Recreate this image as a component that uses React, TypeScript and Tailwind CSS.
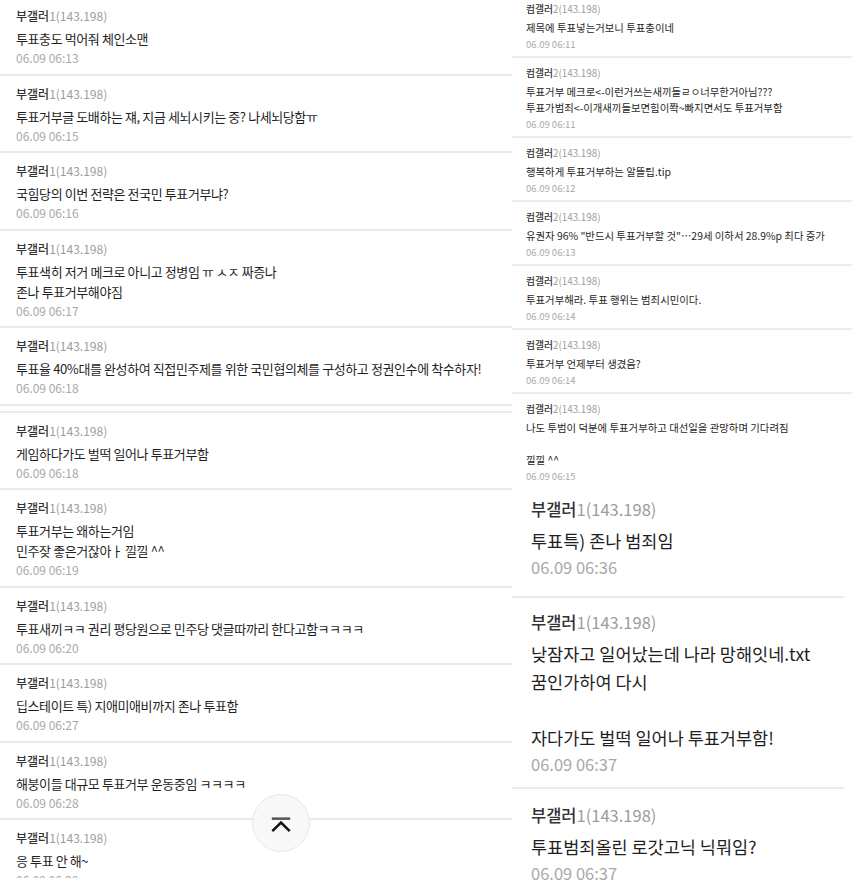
import React from "react";

type Comment = { text: string; time: string };

const leftComments: Comment[] = [
  { text: "투표충도 먹어줘 체인소맨", time: "06.09 06:13" },
  { text: "투표거부글 도배하는 쟤, 지금 세뇌시키는 중? 나세뇌당함ㅠ", time: "06.09 06:15" },
  { text: "국힘당의 이번 전략은 전국민 투표거부냐?", time: "06.09 06:16" },
  { text: "투표색히 저거 메크로 아니고 정병임 ㅠ ㅅㅈ 짜증나\n존나 투표거부해야짐", time: "06.09 06:17" },
  { text: "투표율 40%대를 완성하여 직접민주제를 위한 국민협의체를 구성하고 정권인수에 착수하자!", time: "06.09 06:18" },
];

const leftComments2: Comment[] = [
  { text: "게임하다가도 벌떡 일어나 투표거부함", time: "06.09 06:18" },
  { text: "투표거부는 왜하는거임\n민주잦 좋은거잖아ㅏ 낄낄 ^^", time: "06.09 06:19" },
  { text: "투표새끼ㅋㅋ 권리 평당원으로 민주당 댓글따까리 한다고함ㅋㅋㅋㅋ", time: "06.09 06:20" },
  { text: "딥스테이트 특) 지애미애비까지 존나 투표함", time: "06.09 06:27" },
  { text: "해붕이들 대규모 투표거부 운동중임 ㅋㅋㅋㅋ", time: "06.09 06:28" },
  { text: "응 투표 안 해~", time: "06.09 06:29" },
];

const smallComments: Comment[] = [
  { text: "제목에 투표넣는거보니 투표충이네", time: "06.09 06:11" },
  { text: "투표거부 메크로<-이런거쓰는새끼들ㄹㅇ너무한거아님???\n투표가범죄<-이개새끼들보면힘이쫙~빠지면서도 투표거부함", time: "06.09 06:11" },
  { text: "행복하게 투표거부하는 알뜰팁.tip", time: "06.09 06:12" },
  { text: "유권자 96% \"반드시 투표거부할 것\"…29세 이하서 28.9%p 최다 증가", time: "06.09 06:13" },
  { text: "투표거부해라. 투표 행위는 범죄시민이다.", time: "06.09 06:14" },
  { text: "투표거부 언제부터 생겼음?", time: "06.09 06:14" },
  { text: "나도 투범이 덕분에 투표거부하고 대선일을 관망하며 기다려짐\n\n낄낄 ^^", time: "06.09 06:15" },
];

const bigComments: Comment[] = [
  { text: "투표특) 존나 범죄임", time: "06.09 06:36" },
  { text: "낮잠자고 일어났는데 나라 망해잇네.txt\n꿈인가하여 다시\n\n자다가도 벌떡 일어나 투표거부함!", time: "06.09 06:37" },
  { text: "투표범죄올린 로갓고닉 닉뭐임?", time: "06.09 06:37" },
];

function LeftRow({ c, first, last }: { c: Comment; first?: boolean; last?: boolean }) {
  return (
    <div
      className={`pl-4 pb-[6.5px] ${first ? "pt-[6px]" : "pt-2"} ${last ? "" : "border-b-2 border-[#e9e9ee]"}`}
    >
      <div className="h-5 leading-5 text-[12px]">
        <span className="font-medium text-[#333]">부갤러</span>
        <span className="text-[#9c9c9c]">1(143.198)</span>
      </div>
      <div className="mt-[3px] whitespace-pre-line text-[13px] leading-5 tracking-[-0.4px] text-[#1f1f1f]">
        {c.text}
      </div>
      <div className="text-[12px] leading-[18px] text-[#a8a8a8]">{c.time}</div>
    </div>
  );
}

function SmallRow({ c, first, last }: { c: Comment; first?: boolean; last?: boolean }) {
  return (
    <div
      className={`pl-[14px] pb-[5px] ${first ? "pt-[2px]" : "pt-2"} ${last ? "" : "border-b-2 border-[#ebebf0]"}`}
    >
      <div className="h-[14px] leading-[14px] text-[9.8px]">
        <span className="font-medium text-[#333]">컴갤러</span>
        <span className="text-[#9c9c9c]">2(143.198)</span>
      </div>
      <div className="mt-1 whitespace-pre-line text-[10.4px] leading-4 text-[#1f1f1f]">{c.text}</div>
      <div className="mt-[1px] text-[9.5px] leading-[14px] text-[#a8a8a8]">{c.time}</div>
    </div>
  );
}

const bigPad = ["pt-[9px] pb-[17px]", "pt-[12px] pb-[11px]", "pt-[14px] pb-[11px]"];

function BigRow({ c, index, last }: { c: Comment; index: number; last?: boolean }) {
  return (
    <div className={`mr-2 pl-[19px] ${bigPad[index]} ${last ? "" : "border-b-2 border-[#e9e9ee]"}`}>
      <div className="h-6 leading-6 text-[16.5px]">
        <span className="font-medium text-[#333]">부갤러</span>
        <span className="text-[#9c9c9c]">1(143.198)</span>
      </div>
      <div className="mt-[6px] whitespace-pre-line text-[17.5px] leading-7 text-[#1f1f1f]">{c.text}</div>
      <div className="text-[16.5px] leading-6 text-[#a8a8a8]">{c.time}</div>
    </div>
  );
}

function ScrollTopButton() {
  return (
    <button
      type="button"
      aria-label="맨 위로"
      className="absolute left-[252px] top-[794px] flex h-[58px] w-[58px] items-center justify-center rounded-full border border-[#e8e8e8] bg-[#f8f8f8]"
    >
      <svg width="58" height="58" viewBox="0 0 58 58" fill="none">
        <line x1="19.5" y1="24.5" x2="38.5" y2="24.5" stroke="#555" strokeWidth="2.6" />
        <polyline
          points="20,37.5 29,28.5 38,37.5"
          stroke="#111"
          strokeWidth="2.6"
          strokeLinejoin="miter"
          fill="none"
        />
      </svg>
    </button>
  );
}

export default function App() {
  return (
    <div className="relative flex h-[891px] w-[852px] overflow-hidden bg-white font-['Noto_Sans_CJK_KR','Noto_Sans',sans-serif]">
      <div className="h-[878px] w-[512px] shrink-0 overflow-hidden">
        {leftComments.map((c, i) => (
          <LeftRow key={`a${i}`} c={c} first={i === 0} />
        ))}
        <div className="h-[5px]" />
        <div className="h-[2px] bg-[#e9e9ee]" />
        {leftComments2.map((c, i) => (
          <LeftRow key={`b${i}`} c={c} last={i === leftComments2.length - 1} />
        ))}
      </div>
      <div className="flex w-[340px] shrink-0 flex-col">
        <div>
          {smallComments.map((c, i) => (
            <SmallRow key={`s${i}`} c={c} first={i === 0} last={i === smallComments.length - 1} />
          ))}
        </div>
        <div>
          {bigComments.map((c, i) => (
            <BigRow key={`g${i}`} c={c} index={i} last={i === bigComments.length - 1} />
          ))}
        </div>
      </div>
      <ScrollTopButton />
    </div>
  );
}
